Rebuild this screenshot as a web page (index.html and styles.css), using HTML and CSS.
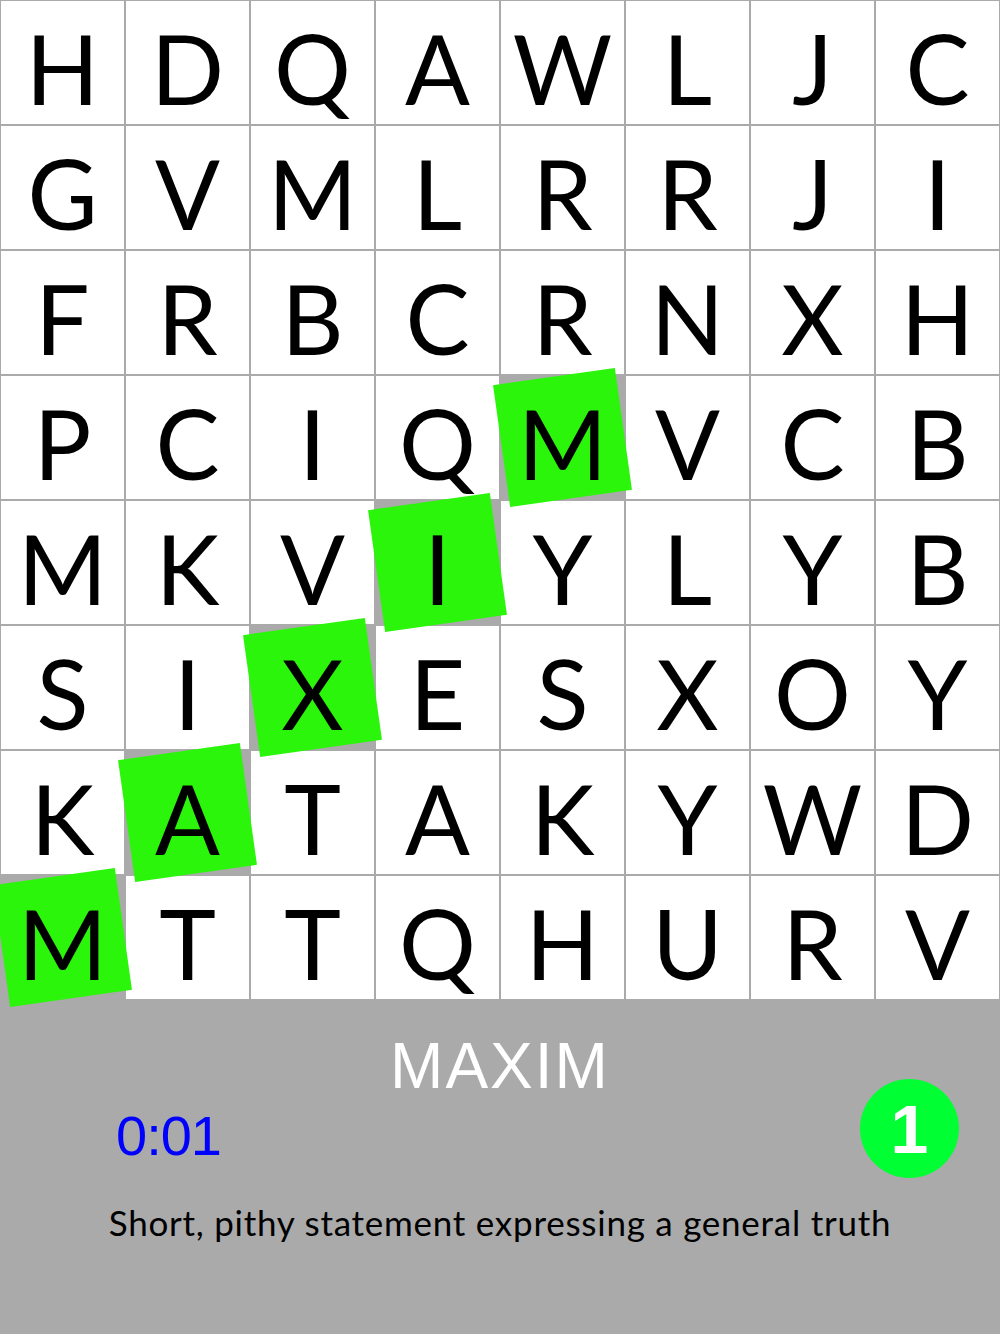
FILE: index.html
```html
<!DOCTYPE html>
<html lang="en">
<head>
    <meta name="viewport" content="width=device-width, initial-scale=1">
    <title>Word Search</title>
    <link rel="stylesheet" href="styles.css">
</head>
<body>
    <div class="board">
        <div class="cell"><span>H</span></div>
        <div class="cell"><span>D</span></div>
        <div class="cell"><span>Q</span></div>
        <div class="cell"><span>A</span></div>
        <div class="cell"><span>W</span></div>
        <div class="cell"><span>L</span></div>
        <div class="cell"><span>J</span></div>
        <div class="cell"><span>C</span></div>

        <div class="cell"><span>G</span></div>
        <div class="cell"><span>V</span></div>
        <div class="cell"><span>M</span></div>
        <div class="cell"><span>L</span></div>
        <div class="cell"><span>R</span></div>
        <div class="cell"><span>R</span></div>
        <div class="cell"><span>J</span></div>
        <div class="cell"><span>I</span></div>

        <div class="cell"><span>F</span></div>
        <div class="cell"><span>R</span></div>
        <div class="cell"><span>B</span></div>
        <div class="cell"><span>C</span></div>
        <div class="cell"><span>R</span></div>
        <div class="cell"><span>N</span></div>
        <div class="cell"><span>X</span></div>
        <div class="cell"><span>H</span></div>

        <div class="cell"><span>P</span></div>
        <div class="cell"><span>C</span></div>
        <div class="cell"><span>I</span></div>
        <div class="cell"><span>Q</span></div>
        <div class="cell found"><span>M</span></div>
        <div class="cell"><span>V</span></div>
        <div class="cell"><span>C</span></div>
        <div class="cell"><span>B</span></div>

        <div class="cell"><span>M</span></div>
        <div class="cell"><span>K</span></div>
        <div class="cell"><span>V</span></div>
        <div class="cell found"><span>I</span></div>
        <div class="cell"><span>Y</span></div>
        <div class="cell"><span>L</span></div>
        <div class="cell"><span>Y</span></div>
        <div class="cell"><span>B</span></div>

        <div class="cell"><span>S</span></div>
        <div class="cell"><span>I</span></div>
        <div class="cell found"><span>X</span></div>
        <div class="cell"><span>E</span></div>
        <div class="cell"><span>S</span></div>
        <div class="cell"><span>X</span></div>
        <div class="cell"><span>O</span></div>
        <div class="cell"><span>Y</span></div>

        <div class="cell"><span>K</span></div>
        <div class="cell found"><span>A</span></div>
        <div class="cell"><span>T</span></div>
        <div class="cell"><span>A</span></div>
        <div class="cell"><span>K</span></div>
        <div class="cell"><span>Y</span></div>
        <div class="cell"><span>W</span></div>
        <div class="cell"><span>D</span></div>

        <div class="cell found"><span>M</span></div>
        <div class="cell"><span>T</span></div>
        <div class="cell"><span>T</span></div>
        <div class="cell"><span>Q</span></div>
        <div class="cell"><span>H</span></div>
        <div class="cell"><span>U</span></div>
        <div class="cell"><span>R</span></div>
        <div class="cell"><span>V</span></div>
    </div>

    <div class="panel">
        <h1 class="word">MAXIM</h1>
        <div class="status">
            <span class="timer">0:01</span>
            <span class="count">1</span>
        </div>
        <p class="clue">Short, pithy statement expressing a general truth</p>
    </div>
</body>
</html>
```

FILE: styles.css
```css
html, body {
    margin: 0;
    padding: 0;
    background-color: #aaa;
}
.board {
    display: grid;
    grid-template-columns: repeat(8, 123px);
    grid-auto-rows: 123px;
    gap: 2px;
    padding: 1px;
    background-color: #aaa;
}
.cell {
    background-color: #fff;
    text-align: center;
    font-family: Lato, "Noto Sans", sans-serif;
    font-size: 96px;
    line-height: 113px;
    padding-top: 10px;
    box-sizing: border-box;
    color: #000;
}
.found {
    background-color: #aaa;
    position: relative;
}
.found::before {
    content: "";
    position: absolute;
    top: 0;
    left: 0;
    width: 123px;
    height: 123px;
    background-color: #2bf50a;
    transform: rotate(-8deg);
}
.found span {
    position: relative;
}
.panel {
    height: 334px;
    box-sizing: border-box;
    padding-top: 42px;
}
.word {
    margin: 0;
    text-align: center;
    font-family: "Liberation Sans", Arial, sans-serif;
    font-weight: normal;
    font-size: 64px;
    line-height: 49px;
    letter-spacing: 2px;
    color: #fff;
}
.status {
    display: flex;
    justify-content: space-between;
    align-items: flex-start;
    margin-top: -12px;
    padding: 0 41px 0 116px;
}
.timer {
    margin-top: 29px;
    font-family: "Liberation Sans", Arial, sans-serif;
    font-size: 56px;
    line-height: 56px;
    letter-spacing: -1px;
    color: #00f;
}
.count {
    display: flex;
    justify-content: center;
    align-items: center;
    width: 99px;
    height: 99px;
    border-radius: 50%;
    background-color: #00ff33;
    color: #fff;
    font-family: "Liberation Sans", Arial, sans-serif;
    font-weight: bold;
    font-size: 68px;
    line-height: 1;
}
.clue {
    margin: 24px 0 0;
    text-align: center;
    font-family: Lato, "Noto Sans", sans-serif;
    font-size: 35px;
    line-height: 40px;
    letter-spacing: 0.75px;
    color: #000;
}
```
